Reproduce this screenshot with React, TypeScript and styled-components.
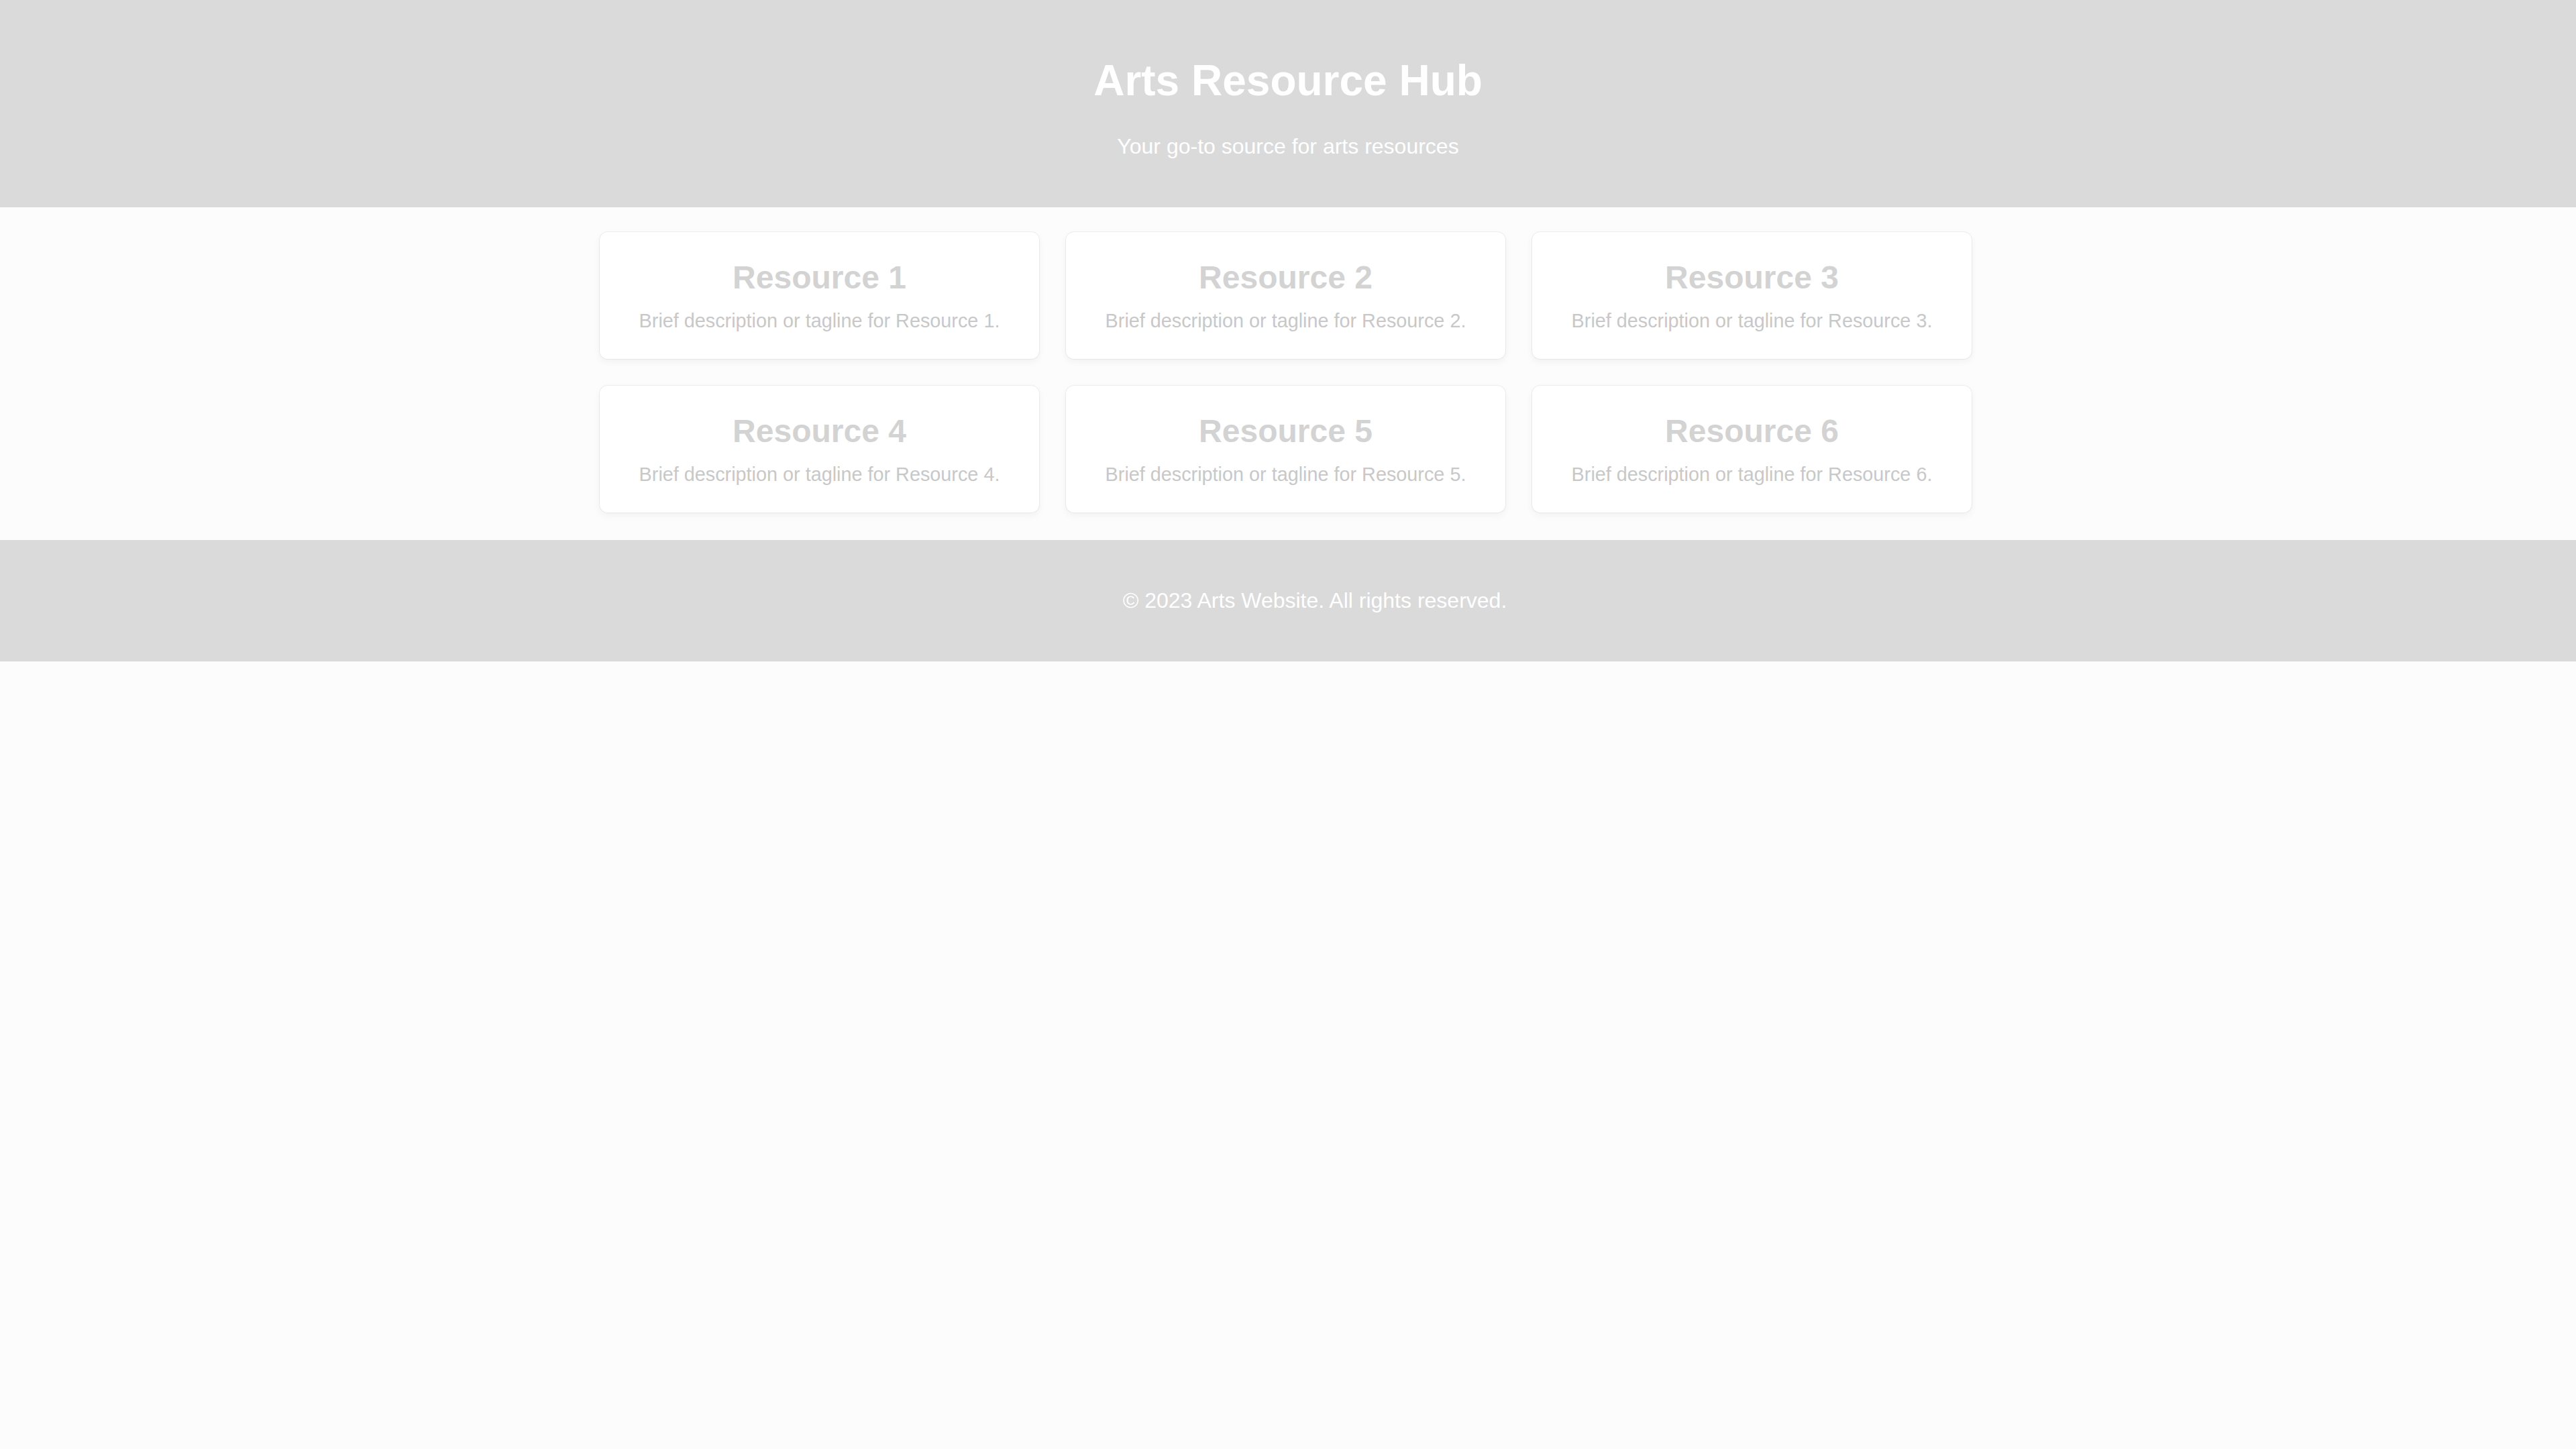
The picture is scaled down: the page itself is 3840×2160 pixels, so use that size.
import React from 'react';
import styled, { createGlobalStyle } from 'styled-components';

const GlobalStyle = createGlobalStyle`
  body {
    margin: 0;
    font-family: "Liberation Sans", Arial, sans-serif;
    font-size: 32px;
    background: #fcfcfc;
    overflow: hidden;
  }
`;

const Header = styled.header`
  background: #dadada;
  color: #ffffff;
  text-align: center;
  padding: 40px;
`;

const Title = styled.h1`
  font-size: 64px;
  margin: 43px 0;
`;

const Tagline = styled.p`
  font-size: 32px;
  margin: 32px 0;
`;

const Main = styled.main`
  max-width: 2045px;
  margin: 0 auto;
  padding: 37px 7px 41px 0;
  display: grid;
  grid-template-columns: repeat(3, 1fr);
  gap: 40px 40px;
`;

const Card = styled.div`
  background: #ffffff;
  border-radius: 12px;
  padding: 40px;
  text-align: center;
  box-shadow: 0 0 0 1px rgba(0, 0, 0, 0.05), 0 4px 12px rgba(0, 0, 0, 0.05);
`;

const CardTitle = styled.h2`
  font-size: 48px;
  color: #d3d3d3;
  margin: 0 0 21px;
`;

const CardText = styled.p`
  font-size: 28.8px;
  color: #c8c8c8;
  margin: 0;
`;

const Footer = styled.footer`
  width: 100%;
  padding: 40px;
  background: #dadada;
  color: #ffffff;
  text-align: center;
`;

const FooterText = styled.p`
  margin: 32px 0;
`;

const resources = [1, 2, 3, 4, 5, 6];

const App: React.FC = () => (
  <>
    <GlobalStyle />
    <Header>
      <Title>Arts Resource Hub</Title>
      <Tagline>Your go-to source for arts resources</Tagline>
    </Header>
    <Main>
      {resources.map((n) => (
        <Card key={n}>
          <CardTitle>Resource {n}</CardTitle>
          <CardText>Brief description or tagline for Resource {n}.</CardText>
        </Card>
      ))}
    </Main>
    <Footer>
      <FooterText>© 2023 Arts Website. All rights reserved.</FooterText>
    </Footer>
  </>
);

export default App;
